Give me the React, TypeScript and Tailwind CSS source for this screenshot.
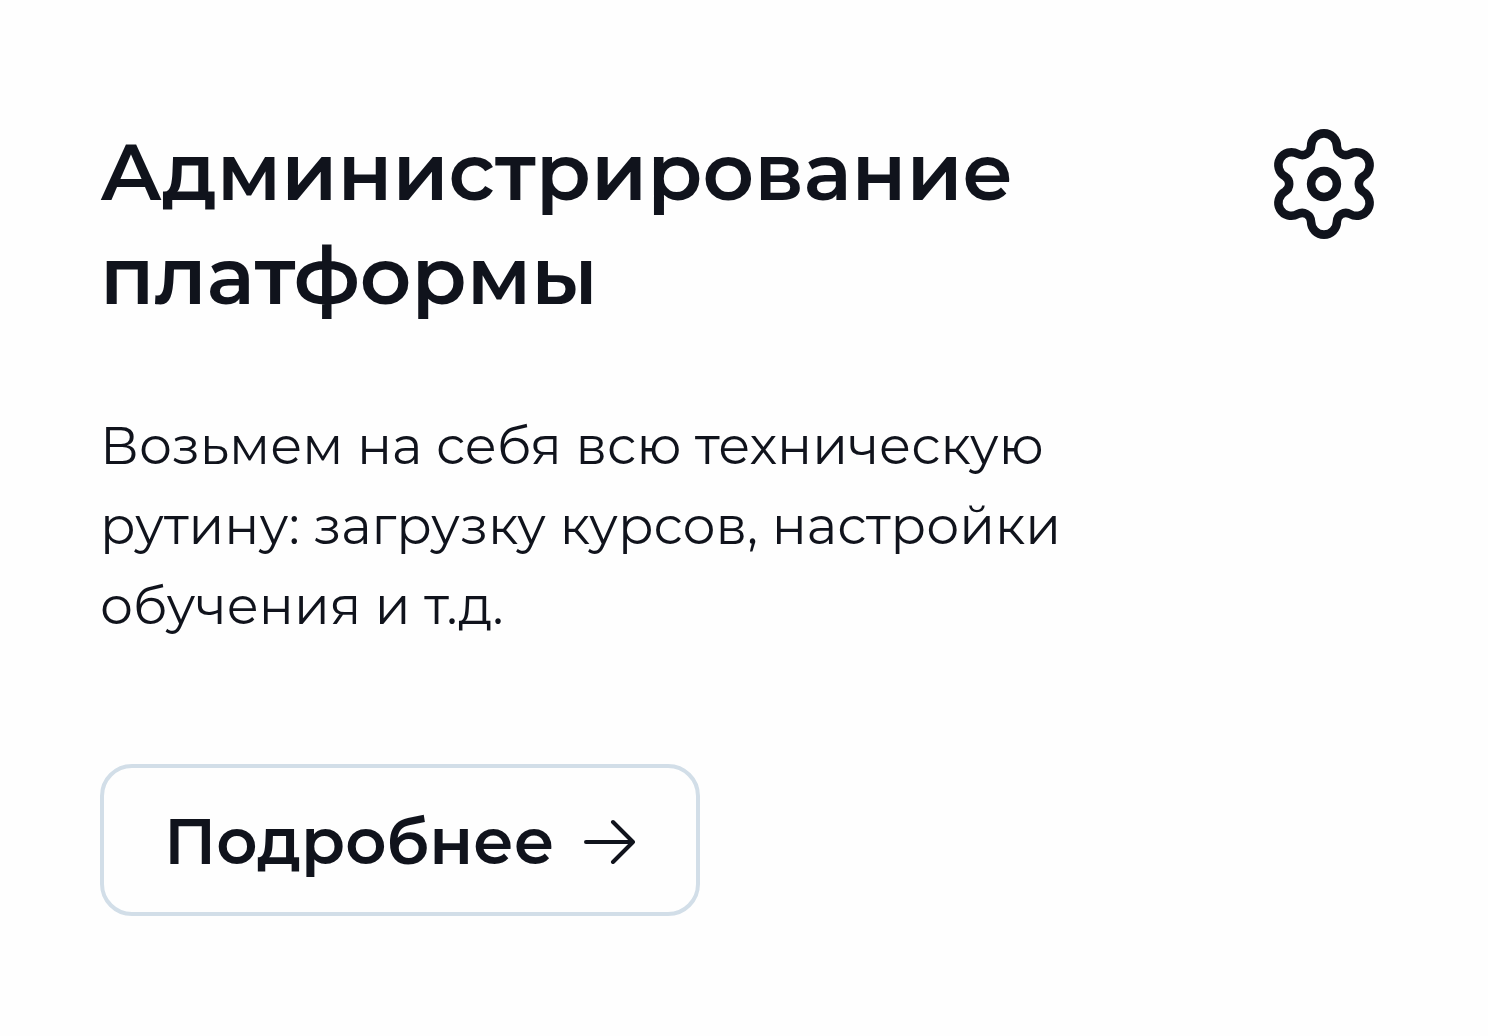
import React from 'react';

const GearIcon: React.FC = () => (
  <svg
    className="mt-2 w-[112px] h-[112px] shrink-0"
    viewBox="-56.4 -56.4 112.8 112.8"
    fill="none"
    stroke="currentColor"
    strokeWidth="8.6"
    aria-hidden="true"
  >
    <path d="M-13-38A13 13 0 0 1 13-38A9 9 0 0 0 26.4-30.3A13 13 0 0 1 39.4-7.7A9 9 0 0 0 39.4 7.7A13 13 0 0 1 26.4 30.3A9 9 0 0 0 13 38A13 13 0 0 1-13 38A9 9 0 0 0-26.4 30.3A13 13 0 0 1-39.4 7.7A9 9 0 0 0-39.4-7.7A13 13 0 0 1-26.4-30.3A9 9 0 0 0-13-38Z" />
    <circle r="13" />
  </svg>
);

const ArrowIcon: React.FC = () => (
  <svg
    className="w-[52px] h-[46px] shrink-0"
    viewBox="0 0 52 46"
    fill="none"
    stroke="currentColor"
    strokeWidth="4"
    strokeLinecap="round"
    strokeLinejoin="round"
    aria-hidden="true"
  >
    <path d="M2 24H49M29 4L49 24L29 44" />
  </svg>
);

const ServiceCard: React.FC = () => {
  return (
    <article className="bg-[#fefefe] text-[#10131c] pl-[100px] pr-[108px] py-[120px]">
      <div className="flex items-start justify-between">
        <h2 className="text-[80px] leading-[104px] font-semibold">
          Администрирование платформы
        </h2>
        <GearIcon />
      </div>
      <p className="mt-[78px] max-w-[1040px] text-[52px] leading-[80px]">
        Возьмем на себя всю техническую рутину: загрузку курсов, настройки обучения и т.д.
      </p>
      <button
        type="button"
        className="mt-[118px] flex h-[152px] w-[600px] items-center justify-between rounded-[32px] border-4 border-[#d2dee8] px-[60px] pt-0.5 text-[64px] font-semibold"
      >
        Подробнее
        <ArrowIcon />
      </button>
    </article>
  );
};

const App: React.FC = () => {
  return (
    <main className="min-h-screen bg-[#fefefe] font-['Montserrat','Inter',sans-serif]">
      <ServiceCard />
    </main>
  );
};

export default App;
